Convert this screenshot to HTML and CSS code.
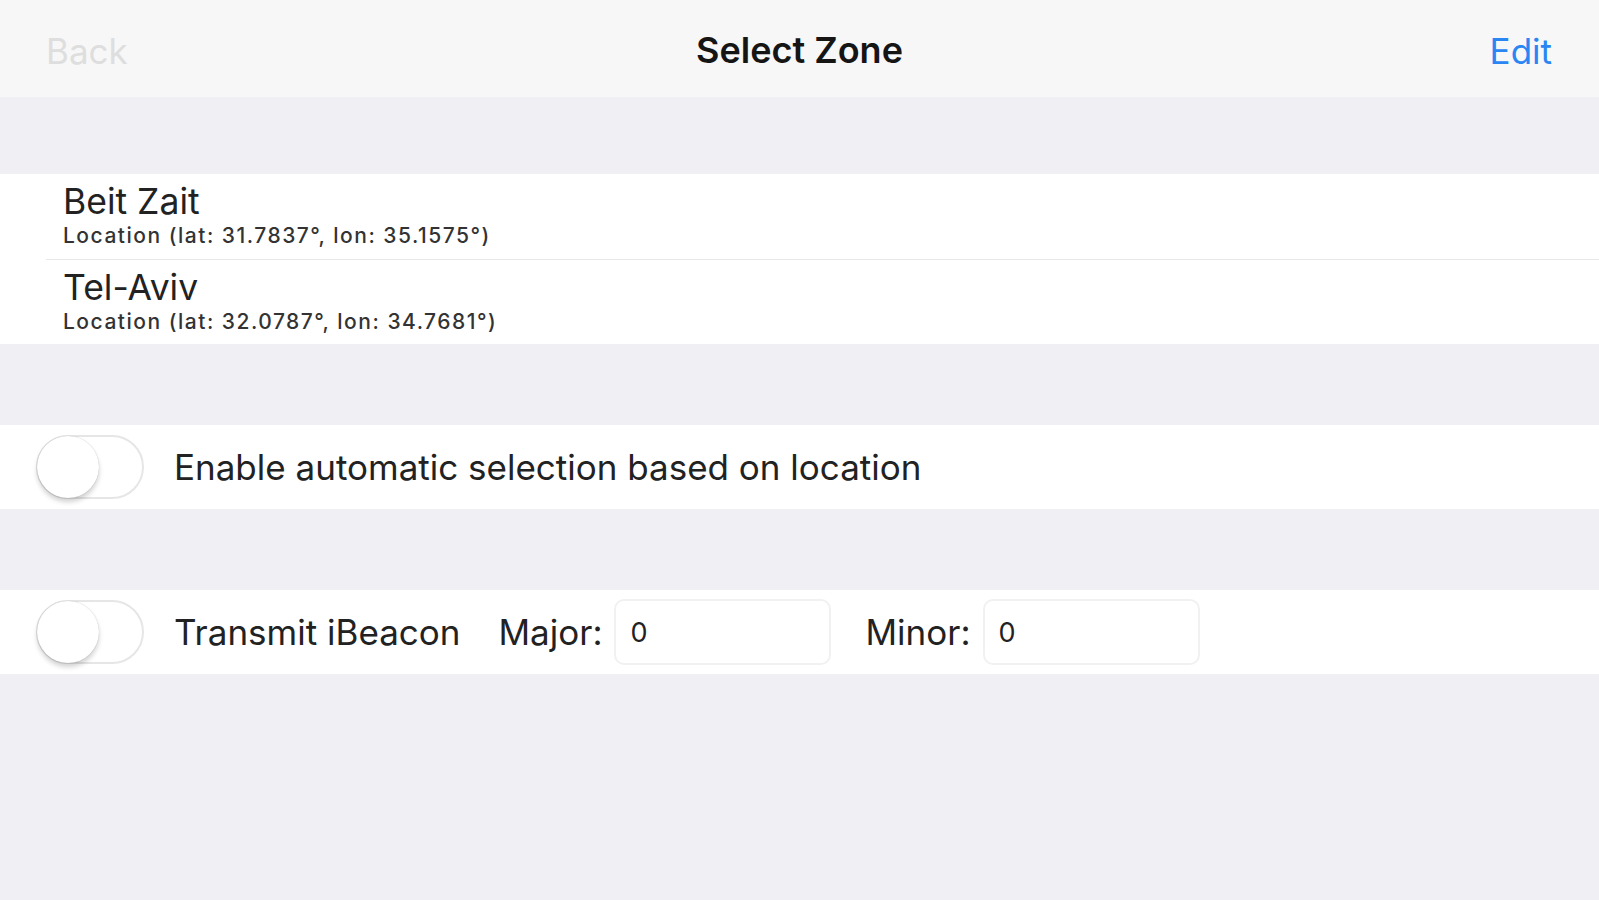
FILE: index.html
```html
<!DOCTYPE html>
<html>
<head>
<meta charset="utf-8">
<link rel="stylesheet" href="styles.css">
</head>
<body>
<header class="nav">
  <span class="nav-back">Back</span>
  <span class="nav-title">Select Zone</span>
  <span class="nav-edit">Edit</span>
</header>
<main class="content">
  <section class="group">
    <div class="zone-row">
      <div class="zone-name">Beit Zait</div>
      <div class="zone-loc">Location (lat: 31.7837°, lon: 35.1575°)</div>
    </div>
    <div class="zone-row">
      <div class="zone-name">Tel-Aviv</div>
      <div class="zone-loc">Location (lat: 32.0787°, lon: 34.7681°)</div>
    </div>
  </section>
  <section class="group">
    <div class="switch-row">
      <span class="toggle"><span class="knob"></span></span>
      <span class="label">Enable automatic selection based on location</span>
    </div>
  </section>
  <section class="group">
    <div class="switch-row">
      <span class="toggle"><span class="knob"></span></span>
      <span class="label beacon">Transmit iBeacon</span>
      <span class="label field-label">Major:</span>
      <span class="field">0</span>
      <span class="label field-label minor">Minor:</span>
      <span class="field">0</span>
    </div>
  </section>
</main>
</body>
</html>
```
FILE: styles.css
```css
* { box-sizing: border-box; }
html, body { margin: 0; padding: 0; }
body {
  background: #efeff4;
  font-family: "Inter", "Liberation Sans", sans-serif;
  color: #1d1d1f;
  width: 1599px;
  height: 900px;
  overflow: hidden;
}
.nav {
  height: 97px;
  background: #f7f7f7;
  display: flex;
  align-items: center;
  justify-content: space-between;
  padding: 4px 47px 0 46px;
  position: relative;
  font-size: 35px;
}
.nav-back { color: #dedede; }
.nav-edit { color: #2a86f3; }
.nav-title {
  position: absolute;
  left: 0; right: 0;
  top: 3px; bottom: 0;
  display: flex;
  align-items: center;
  justify-content: center;
  font-size: 36px;
  font-weight: 600;
  color: #151515;
  pointer-events: none;
}
.content {
  display: flex;
  flex-direction: column;
  padding-top: 77px;
  gap: 81px;
}
.group { background: #fff; }
.zone-row {
  height: 85px;
  padding-left: 63px;
  display: flex;
  flex-direction: column;
  justify-content: center;
  gap: 1px;
}
.zone-row + .zone-row { border-top: 1px solid #e8e8eb; margin-left: 46px; padding-left: 17px; }
.zone-name { font-size: 35.5px; line-height: 40px; color: #222; margin-top: -2px; }
.zone-loc { font-size: 21px; line-height: 26px; color: #333; font-weight: 500; letter-spacing: 1.5px; }
.switch-row {
  height: 84px;
  display: flex;
  align-items: center;
  padding-left: 36px;
}
.toggle {
  width: 108px;
  height: 64px;
  border-radius: 32px;
  border: 2px solid #e6e6e6;
  background: #fff;
  position: relative;
  flex: none;
  margin-right: 30px;
}
.knob {
  position: absolute;
  left: -1px; top: -1px;
  width: 62px; height: 62px;
  border-radius: 50%;
  background: #fff;
  box-shadow: 0 4px 5px rgba(0,0,0,0.18), 0 0 1px rgba(0,0,0,0.25);
}
.label { font-size: 35px; color: #222; }
.beacon { margin-right: 38px; }
.field-label { margin-right: 12px; }
.minor { margin-left: 34px; }
.field {
  width: 217px;
  height: 66px;
  border: 2px solid #f1f1f1;
  border-radius: 10px;
  font-size: 27px;
  display: flex;
  align-items: center;
  padding-left: 14px;
  color: #222;
  flex: none;
}
```
